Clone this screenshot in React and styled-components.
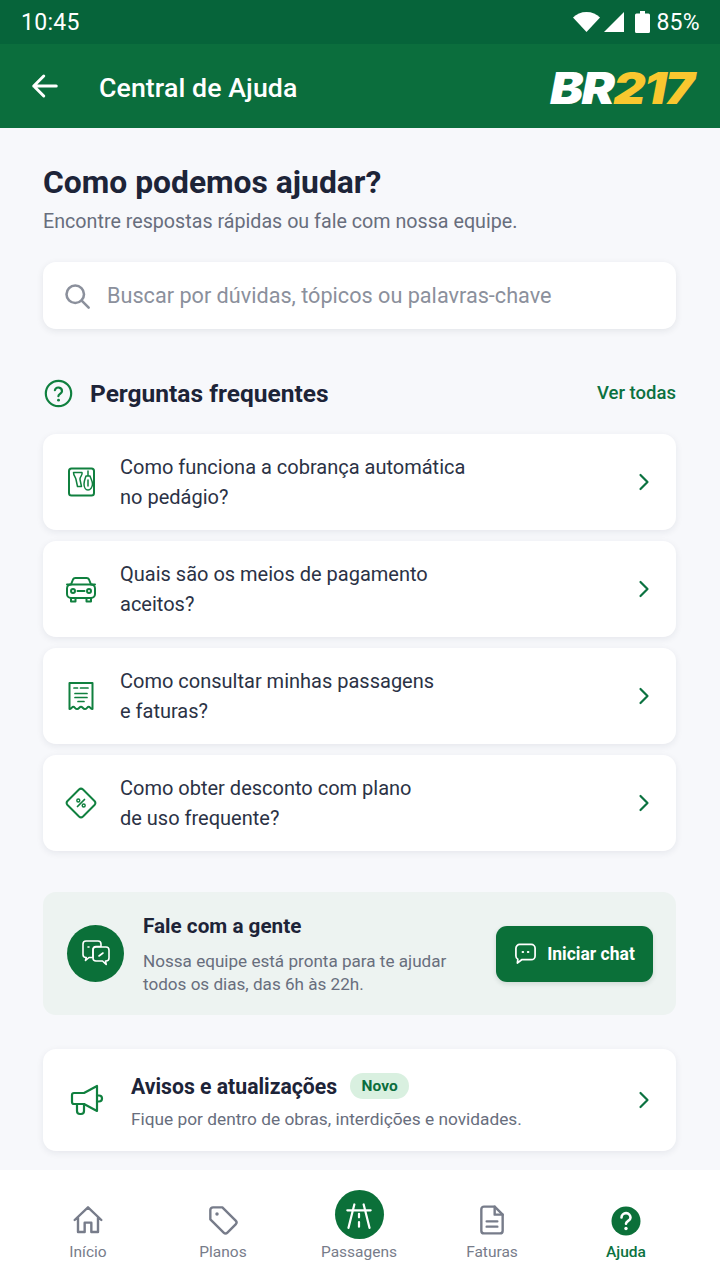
import React from "react";
import styled, { createGlobalStyle } from "styled-components";

const Global = createGlobalStyle`
  html, body { margin: 0; padding: 0; background: #f7f8fb; }
  * { box-sizing: border-box; }
  body { font-family: Roboto, "Noto Sans", sans-serif; }
`;
const Page = styled.div`
  width: 720px; height: 1280px; display: flex; flex-direction: column; overflow: hidden; background: #f7f8fb;
`;
const StatusBar = styled.div`
  height: 44px; background: #06643a; color: #fff; display: flex; align-items: center; justify-content: space-between;
  padding: 0 20px 0 21px; font-family: Roboto, sans-serif; font-size: 23px; letter-spacing: .3px;
`;
const StatusRight = styled.div`display: flex; align-items: center; gap: 4px;`;
const Percent = styled.span`margin-left: 2px;`;
const SignalIcon = styled.svg`margin-right: 7px;`;
const Header = styled.header`
  height: 84px; background: #0b6e3d; color: #fff; display: flex; align-items: center; padding: 0 27px 0 30px;
`;
const HeaderTitle = styled.h1`
  margin: 4px 0 0 39px; flex: 1; font: 500 26.700px Roboto, sans-serif; letter-spacing: .1px;
`;
const Logo = styled.div`
  font: italic 900 44px/1 Inter, sans-serif; letter-spacing: -1.500px; color: #fff; transform: scaleX(1.136) translateY(2px); transform-origin: right center;
  span { color: #f9c72f; }
`;
const Main = styled.main`flex: 1; padding: 34px 44px 0 43px; display: flex; flex-direction: column;`;
const Title = styled.h2`margin: 0; font-size: 31.800px; line-height: 40px; font-weight: 700; color: #1d2438;`;
const Sub = styled.p`margin: 7px 0 0; font-size: 19.700px; line-height: 26px; color: #686e7d;`;
const Search = styled.div`
  margin-top: 27px; height: 67px; background: #fff; border-radius: 13px; box-shadow: 0 2px 7px rgba(30,40,60,.09);
  display: flex; align-items: center; gap: 16px; padding: 0 20px; color: #8b909c; font-size: 21.650px;
`;
const SectionHead = styled.div`
  margin-top: 47px; height: 34px; display: flex; align-items: center; justify-content: space-between;
`;
const SectionTitle = styled.div`
  display: flex; align-items: center; gap: 17px; padding-left: 1px; font-size: 24.500px; font-weight: 700; color: #1d2438;
`;
const SectionIcon = styled.span`color: #10803f; display: flex;`;
const SeeAll = styled.span`font-size: 18.500px; font-weight: 500; color: #0b7240;`;
const List = styled.div`margin-top: 24px; display: flex; flex-direction: column; gap: 11px;`;
const Card = styled.div`
  background: #fff; border-radius: 13px; box-shadow: 0 2px 7px rgba(30,40,60,.08);
  display: flex; align-items: center;
`;
const FaqCard = styled(Card)`height: 96px; padding: 0 20px 0 20px;`;
const FaqIcon = styled.div`width: 36px; display: flex; justify-content: center; margin-right: 21px; color: #10803f;`;
const FaqText = styled.div`flex: 1; font-size: 20px; line-height: 30px; color: #2b3245; white-space: pre-line; margin-top: -1px;`;
const Chevron = styled.div`color: #0b7240; display: flex;`;
const ChatCard = styled.div`
  margin-top: 41px; height: 123px; border-radius: 13px; background: #edf3f1; display: flex; align-items: center; padding: 0 23px 0 24px;
`;
const ChatBadge = styled.div`
  width: 57px; height: 57px; border-radius: 50%; background: #0b7039; color: #fff; display: flex; align-items: center; justify-content: center; flex: none;
`;
const ChatBody = styled.div`flex: 1; margin-left: 19px; padding-top: 3px;`;
const ChatTitle = styled.div`font-size: 20.700px; line-height: 24px; font-weight: 700; color: #1d2438;`;
const ChatText = styled.div`margin-top: 12px; font-size: 17.100px; line-height: 23px; color: #686e7d; white-space: pre-line;`;
const ChatButton = styled.div`
  width: 157px; height: 56px; border-radius: 11px; background: #0b7039; color: #fff; display: flex; align-items: center; justify-content: center; gap: 10px;
  font-size: 17.500px; font-weight: 700; box-shadow: 0 2px 5px rgba(20,60,40,.14); flex: none;
`;
const NoticeCard = styled(Card)`margin-top: 34px; height: 102px; padding: 0 20px 0 26px;`;
const NoticeIcon = styled.div`width: 36px; margin-right: 26px; color: #10803f; display: flex;`;
const NoticeBody = styled.div`flex: 1; padding-top: 3px;`;
const NoticeTop = styled.div`display: flex; align-items: center; gap: 13px;`;
const NoticeTitle = styled.div`font-size: 21.200px; font-weight: 700; color: #1d2438;`;
const Pill = styled.span`
  height: 26px; width: 59px; border-radius: 13px; background: #d9f0e0; color: #0b6e3d; font-size: 15.500px; font-weight: 700;
  display: flex; align-items: center; justify-content: center;
`;
const NoticeText = styled.div`margin-top: 9px; font-size: 17.300px; line-height: 22px; color: #686e7d;`;
const Nav = styled.nav`
  height: 110px; background: #fff; display: grid; grid-template-columns: 134px 136px 136px 130px 138px; padding: 21px 0 0 21px;
`;
const NavItem = styled.div`
  display: flex; flex-direction: column; align-items: center; font-size: 15.500px; line-height: 18px;
  color: ${p => (p.$active ? "#0b7240" : "#777c8a")}; font-weight: ${p => (p.$active ? 500 : 400)};
`;
const NavIconSlot = styled.div`
  height: 48px; display: flex; align-items: flex-end; justify-content: center; margin-bottom: 4px; padding-bottom: ${p => (p.$big ? "0" : "3px")};
`;
const RoadBadge = styled.div`
  width: 49px; height: 49px; border-radius: 50%; background: #0b7039; color: #fff; display: flex; align-items: center; justify-content: center;
`;

const Ico = ({ size = 24, w = 2, children, vb = 24 }) => (
  <svg width={size} height={size} viewBox={`0 0 ${vb} ${vb}`} fill="none" stroke="currentColor" strokeWidth={w} strokeLinecap="round" strokeLinejoin="round">{children}</svg>
);
const Chev = () => (
  <Chevron><Ico size={24} w={2.200}><path d="M8.500 5l7 7-7 7" /></Ico></Chevron>
);
const Toll = () => (
  <Ico size={32} vb={32} w={2}>
    <rect x="4" y="2.500" width="25" height="27" rx="2.500" />
    <path d="M8.500 6.500h8.500c1 3-2.500 4-2 7l1.500 7h-4l-1.500-7c-.5-2.500-2.500-4-2.500-7z" strokeWidth="1.500" />
    <path d="M23 5v5M21 10h4c1 3 2.500 5 2.500 8 0 3-2 6-4.500 6s-4-3-4-6c0-3 1-5 2-8zM23 14v6" strokeWidth="1.500" />
  </Ico>
);
const Car = () => (
  <Ico size={32} vb={32} w={2}>
    <path d="M6 11.500l2-5A2.500 2.500 0 0 1 10.400 5h11.200A2.500 2.500 0 0 1 24 6.500l2 5M2 11.500h4M26 11.500h4" />
    <rect x="2" y="11.500" width="28" height="13.500" rx="4" />
    <path d="M6 25v3.500h4.500V25M21.500 25v3.500H26V25M12.500 18h7" />
    <circle cx="8" cy="18" r="2" /><circle cx="24" cy="18" r="2" />
  </Ico>
);
const Receipt = () => (
  <Ico size={32} vb={32} w={2}>
    <path d="M4.500 3h23v26c-2 0-2.200-2.200-3.800-2.200s-1.800 2.200-3.800 2.200-2.300-2.200-3.900-2.200-1.900 2.200-3.900 2.200-2.200-2.200-3.800-2.200S6.500 29 4.500 29z" />
    <path d="M9 8h3.500M15.500 8H23M10 13.500h12M10 17.500h12M13 21.500h6" strokeWidth="1.700" />
  </Ico>
);
const Discount = () => (
  <Ico size={32} vb={32} w={2}>
    <path d="M14 2.500a3 3 0 0 1 4 0l11.500 11.500a3 3 0 0 1 0 4L18 29.500a3 3 0 0 1-4 0L2.500 18a3 3 0 0 1 0-4z" />
    <path d="M19.500 12.500l-7 7" strokeWidth="1.700" /><circle cx="13.300" cy="13.500" r="1.500" strokeWidth="1.400" /><circle cx="18.700" cy="18.500" r="1.500" strokeWidth="1.400" />
  </Ico>
);
const Chats = () => (
  <Ico size={32} vb={32} w={1.600}>
    <path d="M6 3h12a3 3 0 0 1 3 3v2.500h-5a3 3 0 0 0-3 3v8H9l-3.500 3 .7-3H6a3 3 0 0 1-3-3V6a3 3 0 0 1 3-3z" />
    <path d="M16 9h10a3 3 0 0 1 3 3v8a3 3 0 0 1-3 3h-.5l.7 3.500-3.700-3.500H16a3 3 0 0 1-3-3v-8a3 3 0 0 1 3-3z" />
    <path d="M8 9h1M19 18l4-3" />
  </Ico>
);
const Bubble = () => (
  <Ico size={23} w={1.800}>
    <path d="M6 2.500h12a4 4 0 0 1 4 4v8a4 4 0 0 1-4 4H8l-4.500 3.500.5-3.900A4 4 0 0 1 2 14.500v-8a4 4 0 0 1 4-4z" />
    <path d="M9 10.500h.5M14.500 10.500h.5" strokeWidth="2.200" />
  </Ico>
);
const Megaphone = () => (
  <Ico size={36} vb={36} w={2.200}>
    <path d="M5 11h10L28 4v25l-13-7H5a2 2 0 0 1-2-2v-7a2 2 0 0 1 2-2z" />
    <path d="M28 13.500h2a3 3 0 0 1 0 6h-2" />
    <path d="M8 22v7a3 3 0 0 0 3 3h1a3 3 0 0 0 3-3v-7" />
  </Ico>
);

const faqs = [
  [<Toll />, "Como funciona a cobrança automática\nno pedágio?"],
  [<Car />, "Quais são os meios de pagamento\naceitos?"],
  [<Receipt />, "Como consultar minhas passagens\ne faturas?"],
  [<Discount />, "Como obter desconto com plano\nde uso frequente?"],
];

export default function App() {
  return (
    <Page>
      <Global />
      <StatusBar>
        <span>10:45</span>
        <StatusRight>
          <svg width="27" height="20" viewBox="0 0 27 20" fill="#fff"><path d="M0 5.500C3.500 2 8 0 13.500 0S23.500 2 27 5.500L13.500 20z" /></svg>
          <SignalIcon width="20" height="20" viewBox="0 0 20 20" fill="#fff"><path d="M20 0v20H0z" /></SignalIcon>
          <svg width="15" height="22" viewBox="0 0 15 22" fill="#fff"><path d="M5 0h5v2.500h3.500a1.500 1.500 0 0 1 1.500 1.500v16.500a1.500 1.500 0 0 1-1.500 1.500h-12A1.500 1.500 0 0 1 0 20.500V4a1.500 1.500 0 0 1 1.500-1.500H5z" /></svg>
          <Percent>85%</Percent>
        </StatusRight>
      </StatusBar>
      <Header>
        <Ico size={30} w={2.400}><path d="M21 12H3M11 4l-8 8 8 8" /></Ico>
        <HeaderTitle>Central de Ajuda</HeaderTitle>
        <Logo>BR<span>217</span></Logo>
      </Header>
      <Main>
        <Title>Como podemos ajudar?</Title>
        <Sub>Encontre respostas rápidas ou fale com nossa equipe.</Sub>
        <Search>
          <Ico size={28} w={2.200}><circle cx="10.500" cy="10.500" r="7.500" /><path d="M16 16l6 6" /></Ico>
          Buscar por dúvidas, tópicos ou palavras-chave
        </Search>
        <SectionHead>
          <SectionTitle>
            <SectionIcon>
              <Ico size={29} w={1.800}><circle cx="12" cy="12" r="10.500" /><path d="M9 9.300a3 3 0 0 1 5.900.8c0 2-3 2.500-3 4.200" /><path d="M12 17.500h.01" strokeWidth="2.400" /></Ico>
            </SectionIcon>
            Perguntas frequentes
          </SectionTitle>
          <SeeAll>Ver todas</SeeAll>
        </SectionHead>
        <List>
          {faqs.map(([icon, text], i) => (
            <FaqCard key={i}>
              <FaqIcon>{icon}</FaqIcon>
              <FaqText>{text}</FaqText>
              <Chev />
            </FaqCard>
          ))}
        </List>
        <ChatCard>
          <ChatBadge><Chats /></ChatBadge>
          <ChatBody>
            <ChatTitle>Fale com a gente</ChatTitle>
            <ChatText>{"Nossa equipe está pronta para te ajudar\ntodos os dias, das 6h às 22h."}</ChatText>
          </ChatBody>
          <ChatButton><Bubble />Iniciar chat</ChatButton>
        </ChatCard>
        <NoticeCard>
          <NoticeIcon><Megaphone /></NoticeIcon>
          <NoticeBody>
            <NoticeTop><NoticeTitle>Avisos e atualizações</NoticeTitle><Pill>Novo</Pill></NoticeTop>
            <NoticeText>Fique por dentro de obras, interdições e novidades.</NoticeText>
          </NoticeBody>
          <Chev />
        </NoticeCard>
      </Main>
      <Nav>
        <NavItem>
          <NavIconSlot><Ico size={32} w={1.800}><path d="M2 12L12 2.500 22 12M4.500 10v11h5v-7h5v7h5V10" /></Ico></NavIconSlot>
          Início
        </NavItem>
        <NavItem>
          <NavIconSlot><Ico size={32} w={1.800}><path d="M2.500 4.500a2 2 0 0 1 2-2h7l10 10a2 2 0 0 1 0 2.800l-6.200 6.200a2 2 0 0 1-2.800 0l-10-10z" /><path d="M7.500 7.500h.01" strokeWidth="2.600" /></Ico></NavIconSlot>
          Planos
        </NavItem>
        <NavItem>
          <NavIconSlot $big><RoadBadge>
            <Ico size={28} w={1.900}><path d="M2 8h20M8 3L3 23M16 3l5 20M12 11v3M12 18v4" /></Ico>
          </RoadBadge></NavIconSlot>
          Passagens
        </NavItem>
        <NavItem>
          <NavIconSlot><Ico size={32} w={1.800}><path d="M14 2H6a2 2 0 0 0-2 2v16a2 2 0 0 0 2 2h12a2 2 0 0 0 2-2V8z" /><path d="M14 2v6h6M8 13h8M8 17h8" /></Ico></NavIconSlot>
          Faturas
        </NavItem>
        <NavItem $active>
          <NavIconSlot>
            <svg width="30" height="30" viewBox="0 0 30 30">
              <circle cx="15" cy="15" r="14.500" fill="#0b7039" />
              <path d="M10.500 11.500a4.500 4.500 0 0 1 9 .3c0 3-4.500 3.200-4.500 6" fill="none" stroke="#fff" strokeWidth="2.600" strokeLinecap="round" />
              <circle cx="15" cy="22.500" r="1.700" fill="#fff" />
            </svg>
          </NavIconSlot>
          Ajuda
        </NavItem>
      </Nav>
    </Page>
  );
}
